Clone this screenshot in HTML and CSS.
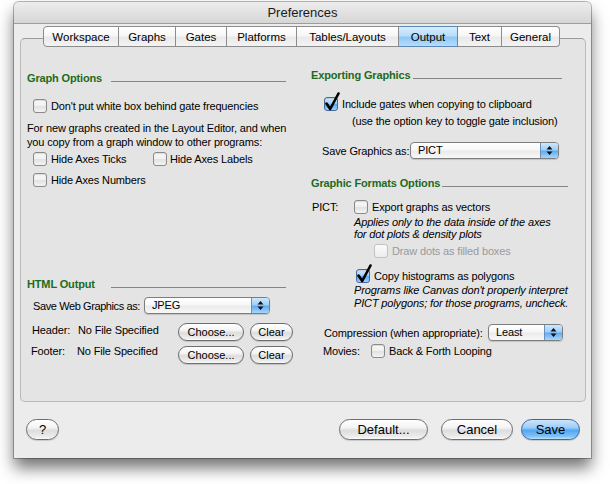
FILE: index.html
```html
<!DOCTYPE html>
<html>
<head>
<meta charset="utf-8">
<title>Preferences</title>
<link rel="stylesheet" href="styles.css">
</head>
<body>
<div class="window">
  <div class="titlebar">Preferences</div>
  <div class="content">
    <div class="tabview">
      <div class="tabs">
        <div class="tab t-ws">Workspace</div>
        <div class="tab t-gr">Graphs</div>
        <div class="tab t-ga">Gates</div>
        <div class="tab t-pl">Platforms</div>
        <div class="tab t-tl">Tables/Layouts</div>
        <div class="tab t-ou sel">Output</div>
        <div class="tab t-tx">Text</div>
        <div class="tab t-ge">General</div>
      </div>
      <div class="panel">
        <div class="col">
          <div class="hdr hl mt32"><span>Graph Options</span><i class="rule ra"></i></div>
          <div class="cbrow ind6 mt14"><span class="cb"></span>Don't put white box behind gate frequencies</div>
          <p class="para mt8">For new graphs created in the Layout Editor, and when<br>you copy from a graph window to other programs:</p>
          <div class="cbrow ind6 mt3">
            <span class="item w120"><span class="cb"></span>Hide Axes Ticks</span>
            <span class="item"><span class="cb gap3"></span>Hide Axes Labels</span>
          </div>
          <div class="cbrow ind6 mt7"><span class="cb"></span>Hide Axes Numbers</div>

          <div class="hdr hl mt90"><span>HTML Output</span><i class="rule ra"></i></div>
          <div class="row ind6 mt6"><span class="lbl w111 tight">Save Web Graphics as:</span><span class="popup w126"><span class="ptext">JPEG</span><span class="parrow"><svg width="7" height="11" viewBox="0 0 7 11"><path d="M3.5 1 L6.5 4.5 L0.5 4.5 Z M3.5 10 L6.5 6.5 L0.5 6.5 Z" fill="#111"/></svg></span></span></div>
          <div class="row ind5 mt9">
            <span class="lbl w46 up">Header:</span><span class="lbl w100 up">No File Specified</span>
            <span class="btn small w66">Choose...</span><span class="btn small w43 ml6">Clear</span>
          </div>
          <div class="row ind4 mt5">
            <span class="lbl w46 up2">Footer:</span><span class="lbl w101 up2">No File Specified</span>
            <span class="btn small w66">Choose...</span><span class="btn small w43 ml6">Clear</span>
          </div>
        </div>

        <div class="col">
          <div class="hdr hr1 mt29"><span>Exporting Graphics</span><i class="rule rb"></i></div>
          <div class="cbrow ind13 mt15"><span class="cb on"><svg class="tick" width="17" height="20" viewBox="0 0 17 20"><path d="M2.5 11.5 L6.2 17 L14.5 1.5" fill="none" stroke="#000" stroke-width="2.6" stroke-linecap="round" stroke-linejoin="round"/></svg></span>Include gates when copying to clipboard</div>
          <div class="line ind41 mt3">(use the option key to toggle gate inclusion)</div>
          <div class="row ind11 mt14"><span class="lbl w88">Save Graphics as:</span><span class="popup w149"><span class="ptext">PICT</span><span class="parrow"><svg width="7" height="11" viewBox="0 0 7 11"><path d="M3.5 1 L6.5 4.5 L0.5 4.5 Z M3.5 10 L6.5 6.5 L0.5 6.5 Z" fill="#111"/></svg></span></span></div>
          <div class="hdr hr2 mt17"><span>Graphic Formats Options</span><i class="rule rc"></i></div>
          <div class="cbrow ind1 mt10"><span class="lbl w42">PICT:</span><span class="cb"></span>Export graphs as vectors</div>
          <p class="note ind43 mt2 lh12">Applies only to the data inside of the axes<br>for dot plots &amp; density plots</p>
          <div class="cbrow ind63 mt4 dis"><span class="cb"></span>Draw dots as filled boxes</div>
          <div class="cbrow ind45 mt11"><span class="cb on"><svg class="tick" width="17" height="20" viewBox="0 0 17 20"><path d="M2.5 11.5 L6.2 17 L14.5 1.5" fill="none" stroke="#000" stroke-width="2.6" stroke-linecap="round" stroke-linejoin="round"/></svg></span>Copy histograms as polygons</div>
          <p class="note ind43 mt1 lh13">Programs like Canvas don't properly interpret<br>PICT polygons; for those programs, uncheck.</p>
          <div class="row ind13 mt14"><span class="lbl w164">Compression (when appropriate):</span><span class="popup w75"><span class="ptext">Least</span><span class="parrow"><svg width="7" height="11" viewBox="0 0 7 11"><path d="M3.5 1 L6.5 4.5 L0.5 4.5 Z M3.5 10 L6.5 6.5 L0.5 6.5 Z" fill="#111"/></svg></span></span></div>
          <div class="cbrow ind12 mt3"><span class="lbl w48">Movies:</span><span class="cb"></span>Back &amp; Forth Looping</div>
        </div>
      </div>
    </div>
    <div class="buttons">
      <span class="btn help">?</span>
      <span class="spacer"></span>
      <span class="btn w89">Default...</span>
      <span class="btn w72 ml13">Cancel</span>
      <span class="btn w59 ml8 primary">Save</span>
    </div>
  </div>
</div>
</body>
</html>
```

FILE: styles.css
```css
* { box-sizing: border-box; }
html, body { margin: 0; }
body {
  width: 610px;
  height: 484px;
  overflow: hidden;
  background: #ffffff;
  padding: 2px 0 0 14px;
  font-family: "Liberation Sans", Arial, sans-serif;
  font-size: 11px;
  letter-spacing: -0.15px;
  color: #000;
}

.window {
  width: 577px;
  height: 456px;
  background: #ececec;
  border-radius: 5px 5px 0 0;
  box-shadow: 0 0 0 1px rgba(0,0,0,0.28), 0 10px 16px rgba(0,0,0,0.55);
}

.titlebar {
  height: 22px;
  border-bottom: 1px solid #9d9d9d;
  border-radius: 5px 5px 0 0;
  background: linear-gradient(#ededed, #d6d6d6);
  text-align: center;
  font-size: 13px;
  letter-spacing: 0;
  line-height: 22px;
  color: #1a1a1a;
}

.content { padding-top: 2px; }

.tabview { margin: 0 5px 0 6px; }

.tabs {
  display: flex;
  margin-left: 23px;
  height: 21px;
  margin-bottom: -9px;
  position: relative;
  z-index: 1;
}
.tab {
  height: 21px;
  border: 1px solid #8c8c8c;
  border-left: none;
  background: linear-gradient(#ffffff 0%, #f6f6f6 48%, #e9e9e9 52%, #f3f3f3 100%);
  display: flex;
  align-items: center;
  justify-content: center;
  font-size: 11.5px;
  letter-spacing: 0;
  padding-top: 1px;
  white-space: nowrap;
}
.tab:first-child { border-left: 1px solid #8c8c8c; border-radius: 4px 0 0 4px; }
.tab:last-child { border-radius: 0 4px 4px 0; }
.tab.sel {
  background: linear-gradient(#d6edfd 0%, #b8dcfa 48%, #8ec6f5 52%, #b4defc 100%);
  border-color: #5e86b4;
}
.t-ws { width: 76px; }
.t-gr { width: 57px; }
.t-ga { width: 51px; }
.t-pl { width: 70px; }
.t-tl { width: 102px; }
.t-ou { width: 59px; }
.t-tx { width: 44px; }
.t-ge { width: 58px; }

.panel {
  height: 364px;
  border: 1px solid #b9b9b9;
  border-top-color: #9c9c9c;
  border-radius: 5px;
  background: #e4e4e4;
  display: grid;
  grid-template-columns: 268px 269px;
  column-gap: 16px;
  align-items: start;
  padding-left: 6px;
}

.col { display: flex; flex-direction: column; }

.hdr {
  display: flex;
  align-items: center;
  height: 14px;
  font-weight: bold;
  color: #1d6b1d;
  white-space: nowrap;
}
.hdr span { flex: none; }
.hdr .rule {
  flex: none;
  margin-left: auto;
  align-self: flex-end;
  margin-bottom: 3px;
  height: 1px;
  background: #858585;
}
.hl { width: 259px; }
.hr1 { width: 251px; }
.hr2 { width: 257px; }
.ra { width: 175px; }
.rb { width: 149px; }
.rc { width: 126px; }

.cbrow, .row, .item { display: flex; align-items: center; white-space: nowrap; }
.cbrow { height: 14px; }
.row { height: 17px; }
.row.mt9, .row.mt5 { height: 18px; }

.cb {
  flex: none;
  position: relative;
  width: 14px;
  height: 14px;
  margin-right: 4px;
  border: 1px solid #8a8a8a;
  border-radius: 3px;
  background: linear-gradient(#f9f9f9 0%, #f1f1f1 45%, #e2e2e2 55%, #f4f4f4 100%);
  box-shadow: inset 0 1px 1px rgba(0,0,0,0.12);
}
.cb.gap3 { margin-right: 3px; }
.cb.on {
  border-color: #46689a;
  background: linear-gradient(#d5ebfd 0%, #a3d0f8 45%, #5ea8ef 55%, #9dd2fb 100%);
}
.cb .tick { position: absolute; left: -1px; top: -6px; }
.dis { color: #9a9a9a; }
.dis .cb { border-color: #c2c2c2; background: linear-gradient(#fbfbfb, #ececec); box-shadow: none; }

.para { margin: 0; line-height: 14px; white-space: nowrap; }
.line { line-height: 14px; white-space: nowrap; }
.note { margin: 0; font-style: italic; white-space: nowrap; }
.lh12 { line-height: 12px; }
.lh13 { line-height: 13px; }

.lbl { flex: none; }
.tight { letter-spacing: -0.4px; }
.up { margin-bottom: 5px; }
.up2 { margin-bottom: 8px; }

.popup {
  flex: none;
  display: flex;
  height: 17px;
  border: 1px solid #7d7d7d;
  border-radius: 4px;
  overflow: hidden;
  background: linear-gradient(#ffffff 0%, #f7f7f7 45%, #ebebeb 55%, #f8f8f8 100%);
  box-shadow: 0 1px 1px rgba(0,0,0,0.15);
}
.ptext { flex: 1; padding-left: 7px; line-height: 15px; }
.parrow {
  width: 18px;
  display: flex;
  align-items: center;
  justify-content: center;
  border-left: 1px solid #6b8fbd;
  background: linear-gradient(#cde7fd 0%, #a1cff8 45%, #62abf0 55%, #a6d7fc 100%);
}

.btn {
  flex: none;
  display: flex;
  align-items: center;
  justify-content: center;
  height: 21px;
  border: 1px solid #6e6e6e;
  border-radius: 11px;
  background: linear-gradient(#fefefe 0%, #f4f4f4 40%, #dddddd 55%, #ebebeb 85%, #fafafa 100%);
  box-shadow: 0 1px 1px rgba(0,0,0,0.15);
  font-size: 13px;
  letter-spacing: 0;
  padding-bottom: 1px;
}
.btn.small {
  height: 18px;
  border-radius: 9px;
  font-size: 11px;
}
.btn.primary {
  border-color: #3c67a0;
  background: linear-gradient(#cbe5fc 0%, #9ccdf8 40%, #55a6f0 55%, #7cc1f8 85%, #b9e2fd 100%);
}
.btn.help { width: 33px; }

.buttons {
  display: flex;
  margin-top: 17px;
  padding: 0 11px 0 12px;
}
.spacer { flex: 1; }

.w42 { width: 42px; }
.w43 { width: 43px; }
.w46 { width: 46px; }
.w48 { width: 48px; }
.w59 { width: 59px; }
.w66 { width: 66px; }
.w72 { width: 72px; }
.w75 { width: 75px; }
.w88 { width: 88px; }
.w89 { width: 89px; }
.w100 { width: 100px; }
.w101 { width: 101px; }
.w111 { width: 111px; }
.w120 { width: 120px; }
.w126 { width: 126px; }
.w149 { width: 149px; }
.w164 { width: 164px; }

.ml6 { margin-left: 6px; }
.ml8 { margin-left: 8px; }
.ml13 { margin-left: 13px; }

.ind1 { margin-left: 1px; }
.ind4 { margin-left: 4px; }
.ind5 { margin-left: 5px; }
.ind6 { margin-left: 6px; }
.ind11 { margin-left: 11px; }
.ind12 { margin-left: 12px; }
.ind13 { margin-left: 13px; }
.ind41 { margin-left: 41px; }
.ind43 { margin-left: 43px; }
.ind45 { margin-left: 45px; }
.ind63 { margin-left: 63px; }

.mt1 { margin-top: 1px; }
.mt2 { margin-top: 2px; }
.mt3 { margin-top: 3px; }
.mt4 { margin-top: 4px; }
.mt5 { margin-top: 5px; }
.mt6 { margin-top: 6px; }
.mt7 { margin-top: 7px; }
.mt8 { margin-top: 8px; }
.mt9 { margin-top: 9px; }
.mt10 { margin-top: 10px; }
.mt11 { margin-top: 11px; }
.mt14 { margin-top: 14px; }
.mt15 { margin-top: 15px; }
.mt17 { margin-top: 17px; }
.mt29 { margin-top: 29px; }
.mt32 { margin-top: 32px; }
.mt90 { margin-top: 90px; }
```
